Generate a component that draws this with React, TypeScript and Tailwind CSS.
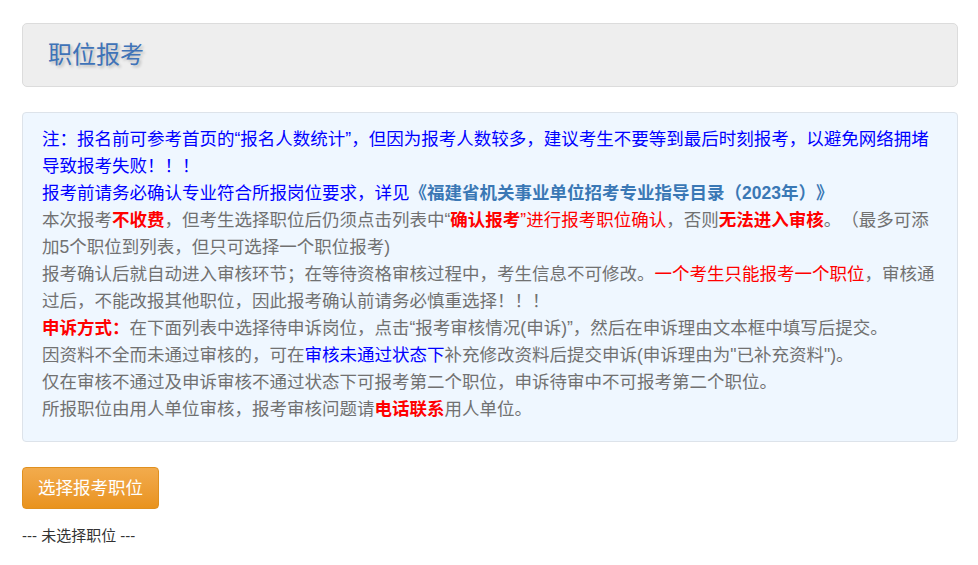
import React from 'react';

const font = { fontFamily: '"Liberation Sans", "Noto Sans CJK SC", sans-serif' };

export default function App() {
  return (
    <div className="min-h-screen bg-white px-[22px] pt-[23px] pr-[20px] [text-spacing-trim:space-all]" style={font}>
      {/* page title */}
      <div className="h-[64px] flex items-center rounded-[5px] border border-[#dcdcdc] bg-[#eeeeee] px-[25px]">
        <h1 className="text-[24px] leading-none text-[#3f73b8] [text-shadow:2px_2px_3px_rgba(0,0,0,0.22)]">
          职位报考
        </h1>
      </div>

      {/* notice */}
      <div className="mt-[25px] rounded-[4px] border border-[#dde3ea] bg-[#eff7ff] pl-[19px] pr-[19px] pt-[13px] pb-[18px] text-[17.5px] leading-[27px] text-[#717171]">
        <p className="text-[#0000ff]">
          注：报名前可参考首页的“报名人数统计”，但因为报考人数较多，建议考生不要等到最后时刻报考，以避免网络拥堵导致报考失败！！！
        </p>
        <p className="text-[#0000ff]">
          报考前请务必确认专业符合所报岗位要求，详见
          <span className="font-bold text-[#3a78b5]">《福建省机关事业单位招考专业指导目录（2023年）》</span>
        </p>
        <p>
          本次报考<b className="text-[#ff0000]">不收费</b>，但考生选择职位后仍须点击列表中“
          <b className="text-[#ff0000]">确认报考</b>
          <span className="text-[#ff0000]">”进行报考职位确认</span>，否则
          <b className="text-[#ff0000]">无法进入审核</b>。（最多可添加5个职位到列表，但只可选择一个职位报考)
        </p>
        <p>
          报考确认后就自动进入审核环节；在等待资格审核过程中，考生信息不可修改。
          <span className="text-[#ff0000]">一个考生只能报考一个职位</span>
          ，审核通过后，不能改报其他职位，因此报考确认前请务必慎重选择！！！
        </p>
        <p>
          <b className="text-[#ff0000]">申诉方式：</b>
          在下面列表中选择待申诉岗位，点击“报考审核情况(申诉)”，然后在申诉理由文本框中填写后提交。
        </p>
        <p>
          因资料不全而未通过审核的，可在<span className="text-[#0000ff]">审核未通过状态下</span>
          补充修改资料后提交申诉(申诉理由为"已补充资料")。
        </p>
        <p>仅在审核不通过及申诉审核不通过状态下可报考第二个职位，申诉待审中不可报考第二个职位。</p>
        <p>
          所报职位由用人单位审核，报考审核问题请<b className="text-[#ff0000]">电话联系</b>用人单位。
        </p>
      </div>

      {/* action */}
      <button className="mt-[25px] h-[42px] rounded-[4px] border border-[#e0901f] bg-gradient-to-b from-[#f2ab4c] to-[#e9931c] px-[15px] text-[17.5px] text-white">
        选择报考职位
      </button>
      <div className="mt-[17px] text-[15px] leading-[20px] text-[#333]">--- 未选择职位 ---</div>
    </div>
  );
}
